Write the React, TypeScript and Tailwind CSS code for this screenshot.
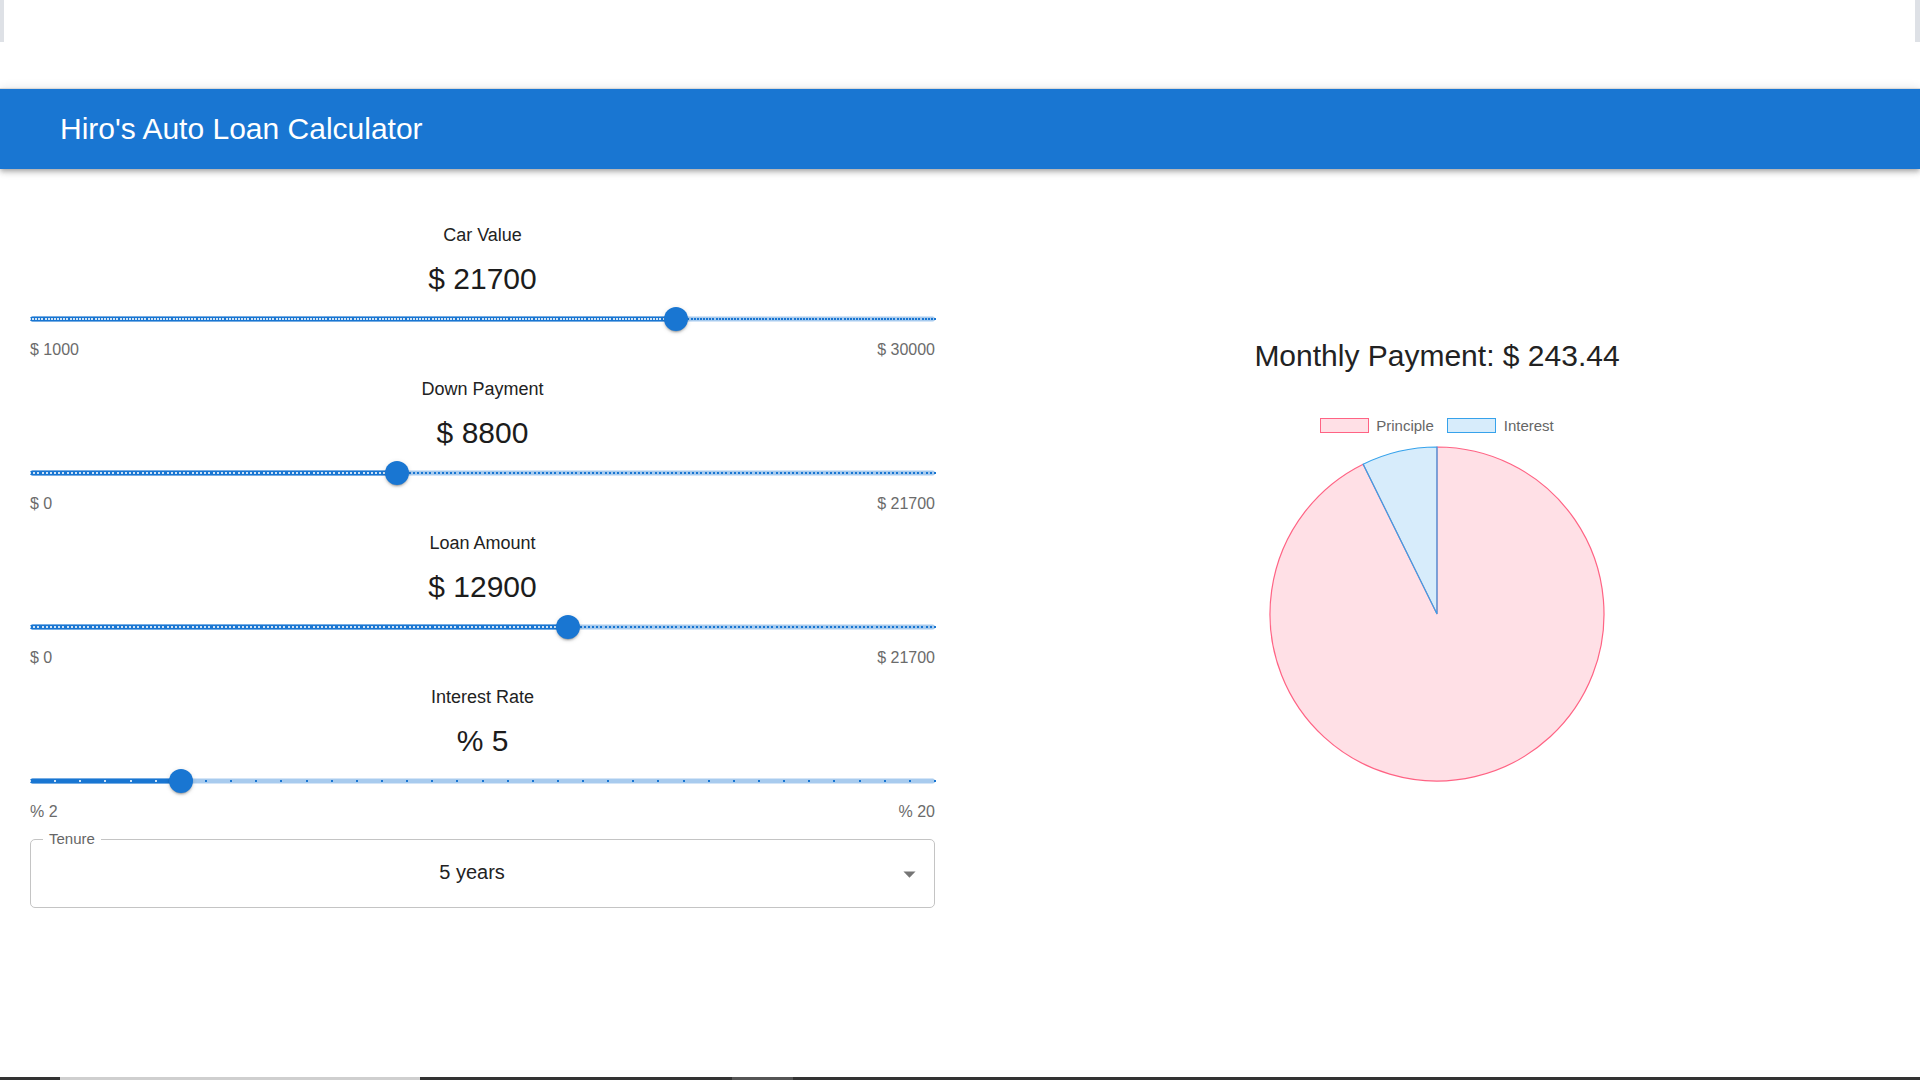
import React from "react";

type SliderProps = {
  min: number;
  max: number;
  step: number;
  value: number;
};

function Slider({ min, max, step, value }: SliderProps) {
  const pct = ((value - min) / (max - min)) * 100;
  const count = Math.round((max - min) / step);
  const marks = Array.from({ length: count + 1 }, (_, i) => (i / count) * 100);

  return (
    <div className="relative h-[24px] w-full">
      {/* rail */}
      <div className="absolute left-0 right-0 top-1/2 h-[5px] -translate-y-1/2 rounded-full bg-[#1976d2] opacity-[0.38]" />
      {/* active track */}
      <div
        className="absolute left-0 top-1/2 h-[5px] -translate-y-1/2 rounded-full bg-[#1976d2]"
        style={{ width: `${pct}%` }}
      />
      {/* marks */}
      {marks.map((m, i) => (
        <span
          key={i}
          className={`absolute top-1/2 h-[2px] w-[2px] -translate-x-1/2 -translate-y-1/2 ${
            m < pct ? "bg-white/80" : "bg-[#1976d2]"
          }`}
          style={{ left: `${m}%` }}
        />
      ))}
      {/* thumb */}
      <div
        className="absolute top-1/2 h-[24px] w-[24px] -translate-x-1/2 -translate-y-1/2 rounded-full bg-[#1976d2] shadow-[0_3px_1px_-2px_rgba(0,0,0,0.2),0_2px_2px_0_rgba(0,0,0,0.14),0_1px_5px_0_rgba(0,0,0,0.12)]"
        style={{ left: `${pct}%` }}
      />
    </div>
  );
}

type FieldProps = {
  label: string;
  display: string;
  minLabel: string;
  maxLabel: string;
} & SliderProps;

function SliderField({ label, display, minLabel, maxLabel, ...slider }: FieldProps) {
  return (
    <div className="text-center">
      <p className="text-[18px] leading-[21px] text-[#222]">{label}</p>
      <p className="mt-[15px] text-[30px] leading-[35px] text-[#1c1c1c]">{display}</p>
      <div className="mt-[11px]">
        <Slider {...slider} />
      </div>
      <div className="mt-[9px] flex justify-between text-[16px] leading-[19px] text-[#6b6b6b]">
        <span>{minLabel}</span>
        <span>{maxLabel}</span>
      </div>
    </div>
  );
}

const CAR_VALUE = 21700;
const DOWN = 8800;
const LOAN = CAR_VALUE - DOWN;
const RATE = 5;
const MONTHS = 60;

function monthlyPayment() {
  const r = RATE / 100 / 12;
  return (LOAN * r) / (1 - Math.pow(1 + r, -MONTHS));
}

function Pie({ principle, interest }: { principle: number; interest: number }) {
  const c = 168;
  const r = 167;
  const frac = interest / (principle + interest);
  const a = frac * Math.PI * 2;
  const px = c - r * Math.sin(a);
  const py = c - r * Math.cos(a);
  const large = frac > 0.5 ? 1 : 0;
  return (
    <svg width="336" height="336" viewBox="0 0 336 336">
      <path
        d={`M${c} ${c} L${c} ${c - r} A${r} ${r} 0 ${1 - large} 1 ${px} ${py} Z`}
        fill="rgba(255,99,132,0.2)"
        stroke="rgb(255,99,132)"
        strokeWidth="1.2"
      />
      <path
        d={`M${c} ${c} L${px} ${py} A${r} ${r} 0 ${large} 1 ${c} ${c - r} Z`}
        fill="rgba(54,162,235,0.2)"
        stroke="rgb(54,162,235)"
        strokeWidth="1.2"
      />
    </svg>
  );
}

export default function App() {
  const payment = monthlyPayment();
  const interest = payment * MONTHS - LOAN;

  return (
    <div className="flex min-h-screen flex-col bg-white font-['Liberation_Sans',Arial,sans-serif]">
      {/* top strip */}
      <div className="flex h-[88px] justify-between">
        <div className="h-[42px] w-[4px] bg-[#dee1e6]" />
        <div className="h-[42px] w-[5px] bg-[#dee1e6]" />
      </div>

      <header className="relative z-10 flex h-[81px] items-center border-t border-[#d9d9d9] bg-[#1976d2] px-[60px] shadow-[0_2px_4px_-1px_rgba(0,0,0,0.2),0_4px_5px_0_rgba(0,0,0,0.14),0_1px_10px_0_rgba(0,0,0,0.12)]">
        <h1 className="text-[30px] leading-[34px] text-white">Hiro's Auto Loan Calculator</h1>
      </header>

      <main className="grid flex-1 grid-cols-2">
        <section className="flex flex-col gap-[20px] pl-[30px] pr-[25px] pt-[56px]">
          <SliderField
            label="Car Value"
            display={`$ ${CAR_VALUE}`}
            minLabel="$ 1000"
            maxLabel="$ 30000"
            min={1000}
            max={30000}
            step={100}
            value={CAR_VALUE}
          />
          <SliderField
            label="Down Payment"
            display={`$ ${DOWN}`}
            minLabel="$ 0"
            maxLabel={`$ ${CAR_VALUE}`}
            min={0}
            max={CAR_VALUE}
            step={100}
            value={DOWN}
          />
          <SliderField
            label="Loan Amount"
            display={`$ ${LOAN}`}
            minLabel="$ 0"
            maxLabel={`$ ${CAR_VALUE}`}
            min={0}
            max={CAR_VALUE}
            step={100}
            value={LOAN}
          />
          <SliderField
            label="Interest Rate"
            display={`% ${RATE}`}
            minLabel="% 2"
            maxLabel="% 20"
            min={2}
            max={20}
            step={0.5}
            value={RATE}
          />

          <div className="relative -mt-[2px] flex h-[69px] items-center rounded-[5px] border border-[#c4c4c4] pb-[3px] pl-[17px] pr-[38px]">
            <span className="absolute -top-[10px] left-[12px] bg-white px-[6px] text-[15px] leading-[18px] text-[#666]">
              Tenure
            </span>
            <span className="flex-1 text-center text-[20px] leading-[24px] text-[#222]">5 years</span>
            <svg
              className="absolute right-[10px] top-1/2 -translate-y-1/2"
              width="29"
              height="29"
              viewBox="0 0 24 24"
              fill="rgba(0,0,0,0.54)"
            >
              <path d="M7 10l5 5 5-5z" />
            </svg>
          </div>
        </section>

        <section className="flex flex-col items-center pr-[6px] pt-[169px]">
          <h2 className="text-[30px] leading-[35px] text-[#222]">
            Monthly Payment: $ {payment.toFixed(2)}
          </h2>
          <div className="mt-[44px] flex items-center text-[15px] leading-[17px] text-[#666]">
            <span className="h-[15px] w-[49px] border-[1.5px] border-[rgb(255,99,132)] bg-[rgba(255,99,132,0.2)]" />
            <span className="ml-[7px]">Principle</span>
            <span className="ml-[13px] h-[15px] w-[49px] border-[1.5px] border-[rgb(54,162,235)] bg-[rgba(54,162,235,0.2)]" />
            <span className="ml-[8px]">Interest</span>
          </div>
          <div className="mt-[12px]">
            <Pie principle={CAR_VALUE} interest={interest} />
          </div>
        </section>
      </main>

      {/* bottom strip */}
      <div className="flex h-[3px] bg-[#333]">
        <div className="ml-[60px] w-[360px] bg-[#cfcfcf]" />
        <div className="ml-[312px] w-[61px] bg-[#555]" />
      </div>
    </div>
  );
}
